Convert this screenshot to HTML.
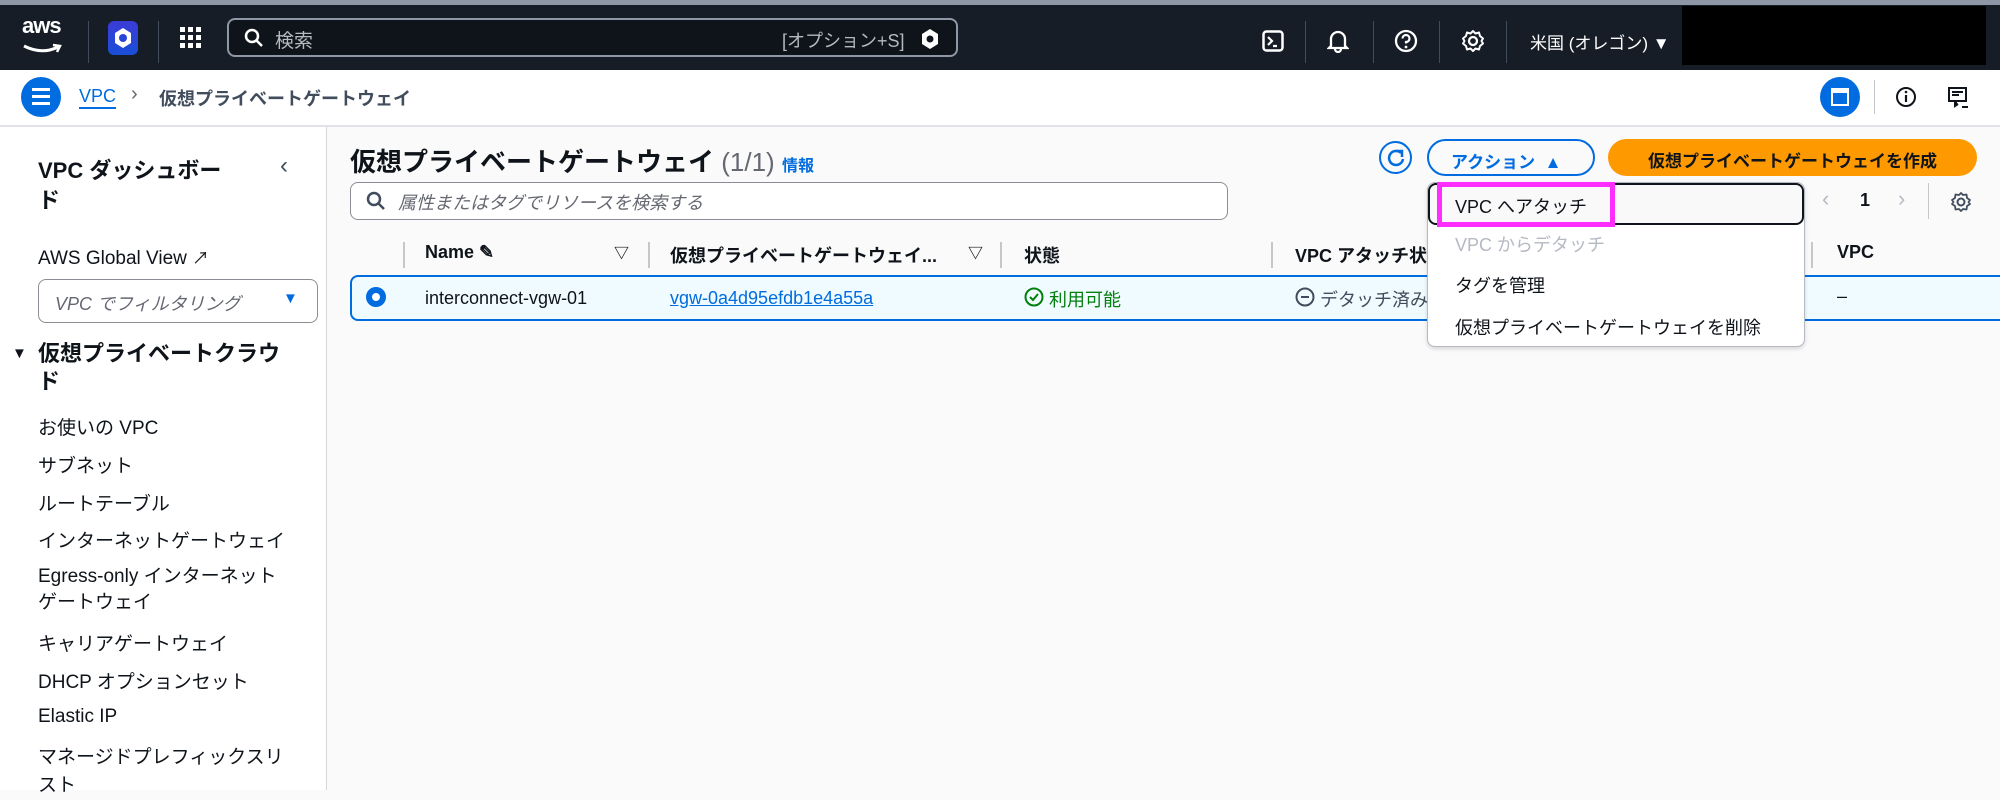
<!DOCTYPE html>
<html><head><meta charset="utf-8"><style>
*{box-sizing:border-box;margin:0;padding:0}
body{width:2000px;height:790px;overflow:hidden;font-family:"Liberation Sans","Noto Sans CJK JP",sans-serif;color:#0f141a;background:#fafafa;position:relative}
.a{position:absolute;white-space:nowrap}
.hd{position:absolute;left:0;top:0;width:2000px;height:70px;background:#161d26;border-top:5px solid #8d97a5}
.vd{position:absolute;top:16px;width:1px;height:42px;background:#414d5c}
.bc{position:absolute;left:0;top:70px;width:2000px;height:57px;background:#fff;border-bottom:2px solid #e1e3e6}
.sb{position:absolute;left:0;top:127px;width:327px;height:663px;background:#fff;border-right:1px solid #d5d7da}
.nav{position:absolute;left:38px;font-size:19px;color:#0f141a}
.th{position:absolute;top:242px;font-size:18px;font-weight:bold;color:#0f141a}
.cd{position:absolute;top:242px;width:2px;height:26px;background:#c6c6cd}
.mi{position:absolute;left:1455px;font-size:18px}
</style></head><body>
<div class="hd">
 <div class="a" style="left:22px;top:8px;color:#fff;font-size:22px;font-weight:bold;letter-spacing:-1px">aws</div>
 <svg class="a" style="left:22px;top:38px" width="42" height="14"><path d="M2 3 Q20 12 36 4" stroke="#fff" stroke-width="3" fill="none"/><path d="M31 2 L38 3 L35 9" stroke="#fff" stroke-width="2.5" fill="none"/></svg>
 <div class="vd" style="left:88px"></div>
 <div class="a" style="left:108px;top:16px;width:30px;height:34px;border-radius:6px;background:linear-gradient(#3b3bd6,#1a4fd8)"></div>
 <svg class="a" style="left:112px;top:21px" width="22" height="24"><polygon points="11,2 19,7 19,17 11,22 3,17 3,7" fill="#fff"/><circle cx="11" cy="12" r="4" fill="#2a44d8"/></svg>
 <div class="vd" style="left:158px"></div>
 <svg class="a" style="left:180px;top:22px" width="22" height="22" fill="#fff"><rect x="0" y="0" width="5" height="5"/><rect x="8" y="0" width="5" height="5"/><rect x="16" y="0" width="5" height="5"/><rect x="0" y="8" width="5" height="5"/><rect x="8" y="8" width="5" height="5"/><rect x="16" y="8" width="5" height="5"/><rect x="0" y="16" width="5" height="5"/><rect x="8" y="16" width="5" height="5"/><rect x="16" y="16" width="5" height="5"/></svg>
 <div class="a" style="left:227px;top:13px;width:731px;height:39px;border:2px solid #8d97a5;border-radius:8px;background:#0f141a"></div>
 <svg class="a" style="left:244px;top:23px" width="20" height="20"><circle cx="8" cy="8" r="6" stroke="#fff" stroke-width="2.5" fill="none"/><path d="M12 12 L18 18" stroke="#fff" stroke-width="2.5"/></svg>
 <div class="a" style="left:275px;top:21px;color:#b4b9c2;font-size:19px">検索</div>
 <div class="a" style="left:782px;top:22px;color:#b4b9c2;font-size:18px">[オプション+S]</div>
 <svg class="a" style="left:920px;top:23px" width="20" height="22"><polygon points="10,1 18,6 18,16 10,21 2,16 2,6" fill="#fff"/><circle cx="10" cy="11" r="3.5" fill="#0f141a"/></svg>
 <svg class="a" style="left:1262px;top:25px" width="22" height="22"><rect x="1.5" y="1.5" width="19" height="19" rx="3" stroke="#fff" stroke-width="2.5" fill="none"/><path d="M6 7 L10 11 L6 15 M11 16 H15" stroke="#fff" stroke-width="2.2" fill="none"/></svg>
 <div class="vd" style="left:1305px"></div>
 <svg class="a" style="left:1327px;top:24px" width="22" height="24"><path d="M4 17 V10 A7 7 0 0 1 18 10 V17 L20 19 H2 Z M8 20 A3 3 0 0 0 14 20" stroke="#fff" stroke-width="2.3" fill="none"/></svg>
 <div class="vd" style="left:1373px"></div>
 <svg class="a" style="left:1394px;top:24px" width="24" height="24"><circle cx="12" cy="12" r="10" stroke="#fff" stroke-width="2.3" fill="none"/><path d="M8.5 9.5 A3.5 3.5 0 1 1 12 13 V14.5" stroke="#fff" stroke-width="2.2" fill="none"/><circle cx="12" cy="18" r="1.4" fill="#fff"/></svg>
 <div class="vd" style="left:1439px"></div>
 <svg class="a" style="left:1461px;top:24px" width="24" height="24"><circle cx="12" cy="12" r="4" stroke="#fff" stroke-width="2.3" fill="none"/><path d="M12 2 L14.5 4.5 L18 3.5 L19 7 L22 9.5 L20.5 12 L22 14.5 L19 17 L18 20.5 L14.5 19.5 L12 22 L9.5 19.5 L6 20.5 L5 17 L2 14.5 L3.5 12 L2 9.5 L5 7 L6 3.5 L9.5 4.5 Z" stroke="#fff" stroke-width="2" fill="none" stroke-linejoin="round"/></svg>
 <div class="vd" style="left:1506px"></div>
 <div class="a" style="left:1530px;top:24px;color:#fff;font-size:17px">米国 (オレゴン) ▼</div>
 <div class="a" style="left:1682px;top:1px;width:304px;height:59px;background:#000"></div>
</div>
<div class="bc">
 <div class="a" style="left:21px;top:7px;width:40px;height:40px;border-radius:50%;background:#006ce0"></div>
 <div class="a" style="left:32px;top:18px;width:18px;height:3px;background:#fff;box-shadow:0 7px 0 #fff,0 14px 0 #fff"></div>
 <div class="a" style="left:79px;top:15px;font-size:18px;color:#006ce0;border-bottom:2px solid #006ce0;line-height:22px">VPC</div>
 <div class="a" style="left:131px;top:13px;font-size:20px;color:#656871">›</div>
 <div class="a" style="left:159px;top:15px;font-size:18px;color:#414d5c;font-weight:bold">仮想プライベートゲートウェイ</div>
 <div class="a" style="left:1820px;top:7px;width:40px;height:40px;border-radius:50%;background:#006ce0"></div>
 <div class="a" style="left:1831px;top:18px;width:18px;height:18px;border:2.5px solid #fff;border-top-width:5px"></div>
 <div class="a" style="left:1874px;top:10px;width:1px;height:34px;background:#c6c6cd"></div>
 <svg class="a" style="left:1895px;top:16px" width="22" height="22"><circle cx="11" cy="11" r="9" stroke="#0f141a" stroke-width="2" fill="none"/><path d="M11 9 V16" stroke="#0f141a" stroke-width="2.2"/><circle cx="11" cy="6" r="1.3" fill="#0f141a"/></svg>
 <svg class="a" style="left:1947px;top:16px" width="24" height="24"><rect x="2" y="2" width="17" height="13" stroke="#0f141a" stroke-width="2" fill="none"/><path d="M5 6 H16 M5 9 H12 M8 14 V20 L11 18 M15 21 H21" stroke="#0f141a" stroke-width="2"/></svg>
</div>
<div class="sb">
 <div class="a" style="left:38px;top:29px;font-size:22px;font-weight:bold;line-height:30px;white-space:normal;width:200px">VPC ダッシュボー<br>ド</div>
 <div class="a" style="left:280px;top:25px;font-size:24px;color:#414d5c">‹</div>
 <div class="nav" style="top:117px">AWS Global View <span style="font-size:17px">↗</span></div>
 <div class="a" style="left:38px;top:152px;width:280px;height:44px;border:1.5px solid #8c8c94;border-radius:8px"></div>
 <div class="a" style="left:55px;top:163px;font-size:18px;color:#656871;font-style:italic">VPC でフィルタリング</div>
 <div class="a" style="left:283px;top:163px;font-size:15px;color:#006ce0">▼</div>
 <div class="a" style="left:12px;top:218px;font-size:15px">▼</div>
 <div class="a" style="left:38px;top:213px;font-size:22px;font-weight:bold;line-height:28px">仮想プライベートクラウ<br>ド</div>
 <div class="nav" style="top:286px">お使いの VPC</div>
 <div class="nav" style="top:324px">サブネット</div>
 <div class="nav" style="top:362px">ルートテーブル</div>
 <div class="nav" style="top:399px">インターネットゲートウェイ</div>
 <div class="nav" style="top:437px;line-height:26px">Egress-only インターネット<br>ゲートウェイ</div>
 <div class="nav" style="top:502px">キャリアゲートウェイ</div>
 <div class="nav" style="top:540px">DHCP オプションセット</div>
 <div class="nav" style="top:579px">Elastic IP</div>
 <div class="nav" style="top:617px;line-height:28px">マネージドプレフィックスリ<br>スト</div>
</div>
<div class="a" style="left:350px;top:142px;font-size:26px;font-weight:bold">仮想プライベートゲートウェイ <span style="font-weight:normal;color:#656871">(1/1)</span> <span style="font-size:16px;color:#006ce0;font-weight:bold">情報</span></div>
<div class="a" style="left:1379px;top:141px;width:33px;height:33px;border:2.5px solid #006ce0;border-radius:50%"></div>
<svg class="a" style="left:1386px;top:148px" width="20" height="20"><path d="M15 5 A7 7 0 1 0 17 11" stroke="#006ce0" stroke-width="2.5" fill="none"/><path d="M10 3 H16 V9" stroke="#006ce0" stroke-width="2.5" fill="none"/></svg>
<div class="a" style="left:1427px;top:139px;width:168px;height:37px;border:2.5px solid #006ce0;border-radius:20px;color:#006ce0;font-weight:bold;font-size:17px;padding:7px 0 0 22px">アクション &nbsp;▲</div>
<div class="a" style="left:1608px;top:139px;width:369px;height:37px;background:#ff9900;border-radius:20px;font-weight:bold;font-size:17px;padding:8px 0 0 0;text-align:center;color:#0f141a">仮想プライベートゲートウェイを作成</div>
<div class="a" style="left:350px;top:182px;width:878px;height:38px;border:1.5px solid #8c8c94;border-radius:8px;background:#fff"></div>
<svg class="a" style="left:366px;top:191px" width="20" height="20"><circle cx="8" cy="8" r="6" stroke="#414d5c" stroke-width="2.5" fill="none"/><path d="M12 12 L18 18" stroke="#414d5c" stroke-width="2.5"/></svg>
<div class="a" style="left:398px;top:189px;font-size:18px;color:#656871;font-style:italic">属性またはタグでリソースを検索する</div>
<div class="a" style="left:1822px;top:186px;font-size:22px;color:#b4b9c2">‹</div>
<div class="a" style="left:1860px;top:190px;font-size:18px;font-weight:bold">1</div>
<div class="a" style="left:1898px;top:186px;font-size:22px;color:#b4b9c2">›</div>
<div class="a" style="left:1928px;top:183px;width:1px;height:36px;background:#c6c6cd"></div>
<svg class="a" style="left:1950px;top:191px" width="22" height="22"><circle cx="11" cy="11" r="3.5" stroke="#414d5c" stroke-width="2" fill="none"/><path d="M11 2 L13 4 L16.5 3.5 L17 7 L20 9 L18.5 11 L20 13 L17 15 L16.5 18.5 L13 18 L11 20 L9 18 L5.5 18.5 L5 15 L2 13 L3.5 11 L2 9 L5 7 L5.5 3.5 L9 4 Z" stroke="#414d5c" stroke-width="1.8" fill="none" stroke-linejoin="round"/></svg>
<div class="cd" style="left:403px"></div>
<div class="th" style="left:425px">Name ✎</div>
<div class="th" style="left:614px;font-size:15px">▽</div>
<div class="cd" style="left:648px"></div>
<div class="th" style="left:670px">仮想プライベートゲートウェイ...</div>
<div class="th" style="left:968px;font-size:15px">▽</div>
<div class="cd" style="left:1000px"></div>
<div class="th" style="left:1024px">状態</div>
<div class="cd" style="left:1271px"></div>
<div class="th" style="left:1295px">VPC アタッチ状</div>
<div class="cd" style="left:1811px"></div>
<div class="th" style="left:1837px">VPC</div>
<div class="a" style="left:350px;top:275px;width:1650px;height:46px;background:#f0fbff;border:2px solid #006ce0;border-right:none;border-radius:8px 0 0 8px"></div>
<div class="a" style="left:366px;top:287px;width:20px;height:20px;border-radius:50%;border:6px solid #006ce0;background:#fff"></div>
<div class="a" style="left:425px;top:288px;font-size:18px">interconnect-vgw-01</div>
<div class="a" style="left:670px;top:288px;font-size:18px;color:#006ce0;text-decoration:underline">vgw-0a4d95efdb1e4a55a</div>
<svg class="a" style="left:1024px;top:287px" width="20" height="20"><circle cx="10" cy="10" r="8.5" stroke="#037f0c" stroke-width="2" fill="none"/><path d="M6 10 L9 13 L14 7" stroke="#037f0c" stroke-width="2" fill="none"/></svg>
<div class="a" style="left:1049px;top:286px;font-size:18px;color:#037f0c">利用可能</div>
<svg class="a" style="left:1295px;top:287px" width="20" height="20"><circle cx="10" cy="10" r="8.5" stroke="#414d5c" stroke-width="2" fill="none"/><path d="M6 10 H14" stroke="#414d5c" stroke-width="2"/></svg>
<div class="a" style="left:1320px;top:286px;font-size:18px;color:#414d5c">デタッチ済み</div>
<div class="a" style="left:1837px;top:286px;font-size:18px">–</div>
<div class="a" style="left:1427px;top:182px;width:378px;height:165px;background:#fff;border:1.5px solid #b4b9c2;border-radius:8px;box-shadow:0 2px 4px rgba(0,0,0,.15)"></div>
<div class="a" style="left:1428px;top:183px;width:376px;height:42px;border:2.5px solid #0f141a;border-radius:8px;background:#f9f9fa"></div>
<div class="a" style="left:1437px;top:182px;width:178px;height:45px;border:5px solid #ff2dff"></div>
<div class="mi" style="top:193px">VPC へアタッチ</div>
<div class="mi" style="top:231px;color:#b4b9c2">VPC からデタッチ</div>
<div class="mi" style="top:272px">タグを管理</div>
<div class="mi" style="top:314px">仮想プライベートゲートウェイを削除</div>
</body></html>
